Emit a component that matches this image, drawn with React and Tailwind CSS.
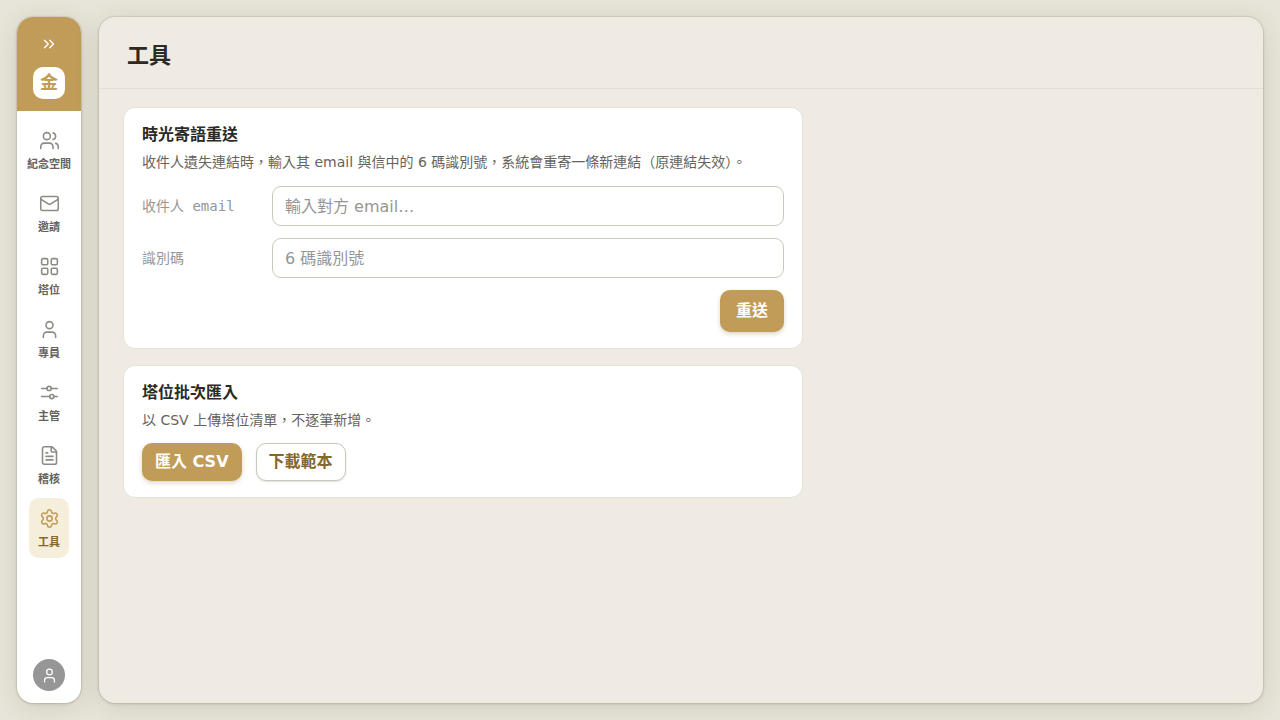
import { useState } from "react";
import {
  ChevronsRight,
  FileText,
  Mail,
  Settings,
  User,
  Users,
} from "lucide-react";

const GridIcon = ({ className, strokeWidth }) => (
  <svg
    className={className}
    viewBox="0 0 24 24"
    fill="none"
    stroke="currentColor"
    strokeWidth={strokeWidth}
    strokeLinecap="round"
    strokeLinejoin="round"
  >
    <rect x="3" y="3" width="7" height="7" rx="1.5" />
    <rect x="14" y="3" width="7" height="7" rx="1.5" />
    <rect x="3" y="14" width="7" height="7" rx="1.5" />
    <rect x="14" y="14" width="7" height="7" rx="1.5" />
  </svg>
);

const SlidersIcon = ({ className, strokeWidth }) => (
  <svg
    className={className}
    viewBox="0 0 24 24"
    fill="none"
    stroke="currentColor"
    strokeWidth={strokeWidth}
    strokeLinecap="round"
    strokeLinejoin="round"
  >
    <path d="M3 7.4h6.2M14 7.4h7" />
    <circle cx="11.6" cy="7.4" r="2.4" />
    <path d="M3 16.6h9.2M17 16.6h4" />
    <circle cx="14.6" cy="16.6" r="2.4" />
  </svg>
);

const navItems = [
  { id: "spaces", label: "紀念空間", Icon: Users },
  { id: "invites", label: "邀請", Icon: Mail },
  { id: "niches", label: "塔位", Icon: GridIcon },
  { id: "agents", label: "專員", Icon: User },
  { id: "managers", label: "主管", Icon: SlidersIcon },
  { id: "audit", label: "稽核", Icon: FileText },
  { id: "tools", label: "工具", Icon: Settings },
];

const Sidebar = () => {
  const [active, setActive] = useState("tools");

  return (
    <aside className="flex w-16 shrink-0 flex-col items-center overflow-hidden rounded-2xl bg-white shadow-[0_0_1px_1px_rgba(60,55,30,0.1),0_1px_3px_rgba(60,55,30,0.12),0_4px_24px_rgba(80,70,40,0.15)]">
      <div className="flex w-full flex-col items-center gap-[11px] bg-[#c09c58] pt-[15px] pb-3">
        <button
          type="button"
          aria-label="展開選單"
          className="flex h-6 w-6 items-center justify-center text-white"
        >
          <ChevronsRight className="h-[18px] w-[18px]" strokeWidth={1.8} />
        </button>
        <div className="flex h-8 w-8 items-center justify-center rounded-[10px] bg-white text-lg font-bold text-[#c09c58]">
          金
        </div>
      </div>
      <nav className="flex flex-1 flex-col items-center gap-[3px] pt-[9px]">
        {navItems.map(({ id, label, Icon }) => (
          <button
            key={id}
            type="button"
            onClick={() => setActive(id)}
            className={
              active === id
                ? "flex h-[60px] min-w-10 flex-col items-center gap-1.5 rounded-[10px] bg-[#f4eedb] pt-2.5 text-[#c09c58]"
                : "flex h-[60px] min-w-10 flex-col items-center gap-1.5 rounded-[10px] pt-2.5 text-[#8c8b86]"
            }
          >
            <Icon className="h-[21px] w-[21px]" strokeWidth={1.8} />
            <span
              className={
                active === id
                  ? "text-[11px] leading-4 font-bold text-[#84672a]"
                  : "text-[11px] leading-4 font-bold text-[#66635c]"
              }
            >
              {label}
            </span>
          </button>
        ))}
      </nav>
      <button
        type="button"
        aria-label="帳號"
        className="mb-3 flex h-8 w-8 items-center justify-center rounded-full bg-[#969696] text-white"
      >
        <User className="h-[17px] w-[17px]" strokeWidth={1.8} />
      </button>
    </aside>
  );
};

const Card = ({ title, description, children }) => (
  <section className="rounded-xl border border-[#e2e2d9] bg-white px-[18px] py-4">
    <h2 className="text-base leading-[22px] font-bold text-[#2a2a26]">
      {title}
    </h2>
    <p className="mt-1.5 text-sm leading-[21px] text-[#66635c]">
      {description}
    </p>
    {children}
  </section>
);

const Field = ({ id, label, placeholder, value, onChange }) => (
  <div className="flex items-center">
    <label
      htmlFor={id}
      className="w-[130px] shrink-0 font-['DejaVu_Sans_Mono','Noto_Sans_CJK_TC',monospace] text-sm text-[#969696]"
    >
      {label}
    </label>
    <input
      id={id}
      value={value}
      onChange={(e) => onChange(e.target.value)}
      placeholder={placeholder}
      className="h-10 min-w-0 flex-1 rounded-[9px] border border-[#c9c8be] bg-white px-3 text-base text-[#2a2a26] placeholder:text-[#969696]"
    />
  </div>
);

const App = () => {
  const [email, setEmail] = useState("");
  const [code, setCode] = useState("");

  return (
    <div className="flex min-h-screen gap-[18px] bg-[#e7e5d9] p-[17px] font-['DejaVu_Sans','Noto_Sans_CJK_TC',sans-serif]">
      <Sidebar />
      <main className="min-w-0 flex-1 rounded-2xl bg-[#efebe3] shadow-[0_0_1px_1px_rgba(60,55,30,0.1),0_1px_3px_rgba(60,55,30,0.12),0_4px_24px_rgba(80,70,40,0.15)]">
        <header className="border-b border-[#e2dfd6] px-7 pt-[23px] pb-[17px]">
          <h1 className="text-[22px] leading-[31px] font-bold text-[#2a2a26]">
            工具
          </h1>
        </header>
        <div className="flex max-w-[728px] flex-col gap-4 px-6 py-[18px]">
          <Card
            title="時光寄語重送"
            description="收件人遺失連結時，輸入其 email 與信中的 6 碼識別號，系統會重寄一條新連結（原連結失效）。"
          >
            <form
              className="mt-[13px] flex flex-col gap-3"
              onSubmit={(e) => e.preventDefault()}
            >
              <Field
                id="email"
                label="收件人 email"
                placeholder="輸入對方 email…"
                value={email}
                onChange={setEmail}
              />
              <Field
                id="code"
                label="識別碼"
                placeholder="6 碼識別號"
                value={code}
                onChange={setCode}
              />
              <button
                type="submit"
                className="h-[42px] self-end rounded-[10px] bg-[#c09c58] px-4 text-base font-bold text-white shadow-[0_2px_4px_rgba(120,90,30,0.25)]"
              >
                重送
              </button>
            </form>
          </Card>
          <Card
            title="塔位批次匯入"
            description="以 CSV 上傳塔位清單，不逐筆新增。"
          >
            <div className="mt-3 flex gap-3.5">
              <button
                type="button"
                className="h-[38px] rounded-[10px] bg-[#c09c58] px-[13px] text-base font-bold text-white shadow-[0_2px_4px_rgba(120,90,30,0.25)]"
              >
                匯入 CSV
              </button>
              <button
                type="button"
                className="h-[38px] rounded-[10px] border border-[#c9c8be] bg-white px-3 text-base font-bold text-[#84672a] shadow-[0_1px_2px_rgba(60,55,30,0.15)]"
              >
                下載範本
              </button>
            </div>
          </Card>
        </div>
      </main>
    </div>
  );
};

export default App;
